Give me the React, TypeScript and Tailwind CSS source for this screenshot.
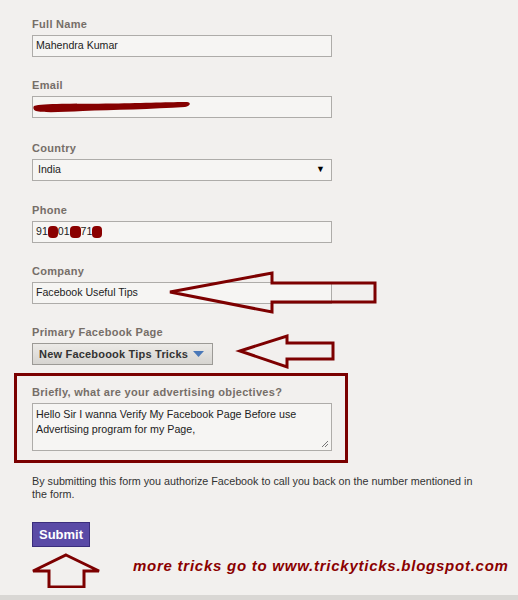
function Label({ text, className = "" }: { text: string; className?: string }) {
  return (
    <div className={`h-[14px] leading-[14px] mb-[4px] text-[11px] font-bold tracking-[0.3px] text-[#766e68] ${className}`}>
      {text}
    </div>
  );
}

function Box({ children, className = "" }: { children?: React.ReactNode; className?: string }) {
  return (
    <div
      className={`h-[22px] w-[300px] border border-[#aeaca9] bg-[#f6f5f3] pl-[3px] flex items-center text-[10.6px] text-[#222] ${className}`}
    >
      {children}
    </div>
  );
}

function Blob({ w }: { w: number }) {
  return <span className={`inline-block h-[12px] rounded-[4px] bg-[#8a0000] ${w === 10 ? "w-[10px]" : "w-[11px]"}`}></span>;
}

function App() {
  return (
    <div className="relative w-[518px] h-[600px] bg-[#f2f0ee] flex flex-col overflow-hidden font-['Liberation_Sans',Arial,sans-serif]">
      <div className="pl-[32px] pt-[17px] flex flex-col">
        <Label text="Full Name" />
        <Box>Mahendra Kumar</Box>

        <Label text="Email" className="mt-[21px]" />
        <Box>
          <svg width="160" height="14" viewBox="0 0 160 14" className="-ml-[3px]">
            <path
              d="M1 6 C 10 3, 40 4, 80 3.5 C 110 3, 140 2, 154 2 C 158 2, 158 6, 152 7 C 120 9, 80 10, 50 11 C 30 12, 10 13, 3 11 C 0 10, 0 7, 1 6 Z"
              fill="#850000"
            />
          </svg>
        </Box>

        <Label text="Country" className="mt-[23px]" />
        <Box className="pl-[5px] pr-[6px] justify-between">
          <span>India</span>
          <span className="text-[9px] text-black">▼</span>
        </Box>

        <Label text="Phone" className="mt-[22px]" />
        <Box>
          <span>91</span>
          <Blob w={10} />
          <span>01</span>
          <Blob w={11} />
          <span>71</span>
          <Blob w={10} />
        </Box>

        <Label text="Company" className="mt-[21px]" />
        <Box>Facebook Useful Tips</Box>

        <Label text="Primary Facebook Page" className="mt-[21px]" />
        <div className="h-[22px] w-[181px] border border-[#9c9a96] bg-gradient-to-b from-[#eceae7] to-[#d6d4d0] flex items-center justify-between pl-[6px] pr-[8px] text-[11px] font-bold tracking-[0.2px] text-[#333]">
          <span>New Faceboook Tips Tricks</span>
          <svg width="11" height="6" viewBox="0 0 11 6">
            <path d="M0 0 H11 L5.5 6 Z" fill="#4a78b8" />
          </svg>
        </div>

        <div className="mt-[8px] -ml-[18px] w-[334px] border-[3px] border-[#7a0000] pt-[9px] pb-[9px] pl-[15px]">
          <Label text="Briefly, what are your advertising objectives?" />
          <div className="relative h-[48px] w-[300px] border border-[#aeaca9] bg-[#f6f5f3] pl-[3px] pt-[3px] text-[10.7px] leading-[15px] text-[#222]">
            Hello Sir I wanna Verify My Facebook Page Before use
            <br />
            Advertising program for my Page,
            <svg width="8" height="8" viewBox="0 0 8 8" className="absolute right-[2px] bottom-[2px]">
              <path d="M7 1 L1 7 M7 4 L4 7" stroke="#777" strokeWidth="1" />
            </svg>
          </div>
        </div>

        <p className="mt-[12px] text-[10.75px] leading-[13px] text-[#333]">
          By submitting this form you authorize Facebook to call you back on the number mentioned in
          <br />
          the form.
        </p>

        <div className="mt-[21px] h-[25px] w-[58px] border border-[#3a2d7c] bg-[#5a4aa6] flex items-center justify-center text-[13px] font-bold text-white">
          Submit
        </div>

        <div className="mt-[1px] flex items-center -ml-[1px]">
          <svg width="74" height="40" viewBox="0 0 74 40" className="shrink-0">
            <path d="M35 7 L68 23 L53 23 L53 39 L18 39 L18 23 L2 23 Z" fill="none" stroke="#7d0000" strokeWidth="3" strokeLinejoin="miter" />
          </svg>
          <span className="ml-[28px] -mt-[4px] whitespace-nowrap text-[15px] font-bold italic tracking-[0.75px] text-[#8b0000]">
            more tricks go to www.trickyticks.blogspot.com
          </span>
        </div>
      </div>

      <div className="mt-auto h-[5px] bg-[#d9d7d4]"></div>

      <svg className="absolute inset-0 pointer-events-none" width="518" height="600" viewBox="0 0 518 600">
        <path d="M170 292 L272 273 L272 283 L375 283 L375 302 L272 302 L272 312 Z" fill="none" stroke="#7d0000" strokeWidth="3" />
        <path d="M240 351 L287 336 L287 343 L333 343 L333 359 L287 359 L287 367 Z" fill="none" stroke="#7d0000" strokeWidth="3" />
      </svg>
    </div>
  );
}

export default App;
